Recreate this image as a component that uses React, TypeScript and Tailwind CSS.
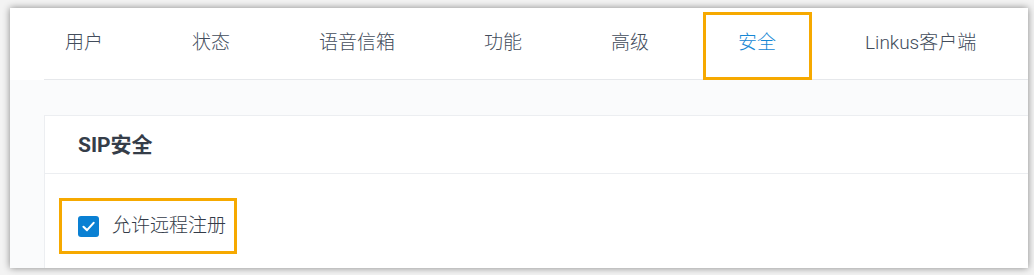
const tabs = ["用户", "状态", "语音信箱", "功能", "高级", "安全", "Linkus客户端"];

export default function App() {
  return (
    <div className="w-[1034px] h-[275px] bg-[#f3f3f3] pt-[8px] pl-[10px] pr-[6px] pb-[7px] overflow-hidden font-['Roboto','Noto_Sans_CJK_SC',sans-serif]">
      <div className="h-full bg-white shadow-[0_0_7px_rgba(0,0,0,0.45)] flex flex-col overflow-hidden">
        {/* Tabs */}
        <div className="h-[72px] shrink-0 bg-white">
          <div className="ml-[34px] h-full border-b border-[#e6e8eb] pl-[21px] flex items-stretch gap-[89px]">
            {tabs.map((tab) => (
              <div key={tab} className="relative flex items-center pb-[1px]">
                <span
                  className={
                    tab === "安全"
                      ? "text-[19px] font-light text-[#1687d4]"
                      : "text-[19px] font-light text-[#424c5b]"
                  }
                >
                  {tab}
                </span>
                {tab === "安全" && (
                  <div className="absolute top-[4px] bottom-[-1px] -left-[35px] -right-[36px] border-[3px] border-[#f6a900]" />
                )}
              </div>
            ))}
          </div>
        </div>

        {/* Content */}
        <div className="flex-1 bg-[#fafbfc] pt-[35px] pl-[34px]">
          <div className="h-full bg-white border-t border-l border-[#eceef1]">
            <div className="h-[58px] border-b border-[#eceef1] pl-[33px] flex items-center">
              <h3 className="text-[21px] font-bold text-[#353d49] pt-[2px]">SIP安全</h3>
            </div>
            <div className="pl-[14px] pt-[24px]">
              <div className="relative w-[178px] h-[56px] flex items-center pl-[19px] gap-[13px]">
                <span className="w-[21px] h-[21px] rounded-[3px] bg-[#0a80d3] flex items-center justify-center">
                  <svg width="15" height="15" viewBox="0 0 14 14" fill="none">
                    <path d="M2.3 7.3 L5.6 10.4 L11.8 3.6" stroke="white" strokeWidth="2" strokeLinecap="round" strokeLinejoin="round" />
                  </svg>
                </span>
                <span className="text-[19px] font-light text-[#333b48]">允许远程注册</span>
                <div className="absolute inset-0 border-[3px] border-[#f6a900]" />
              </div>
            </div>
          </div>
        </div>
      </div>
    </div>
  );
}
